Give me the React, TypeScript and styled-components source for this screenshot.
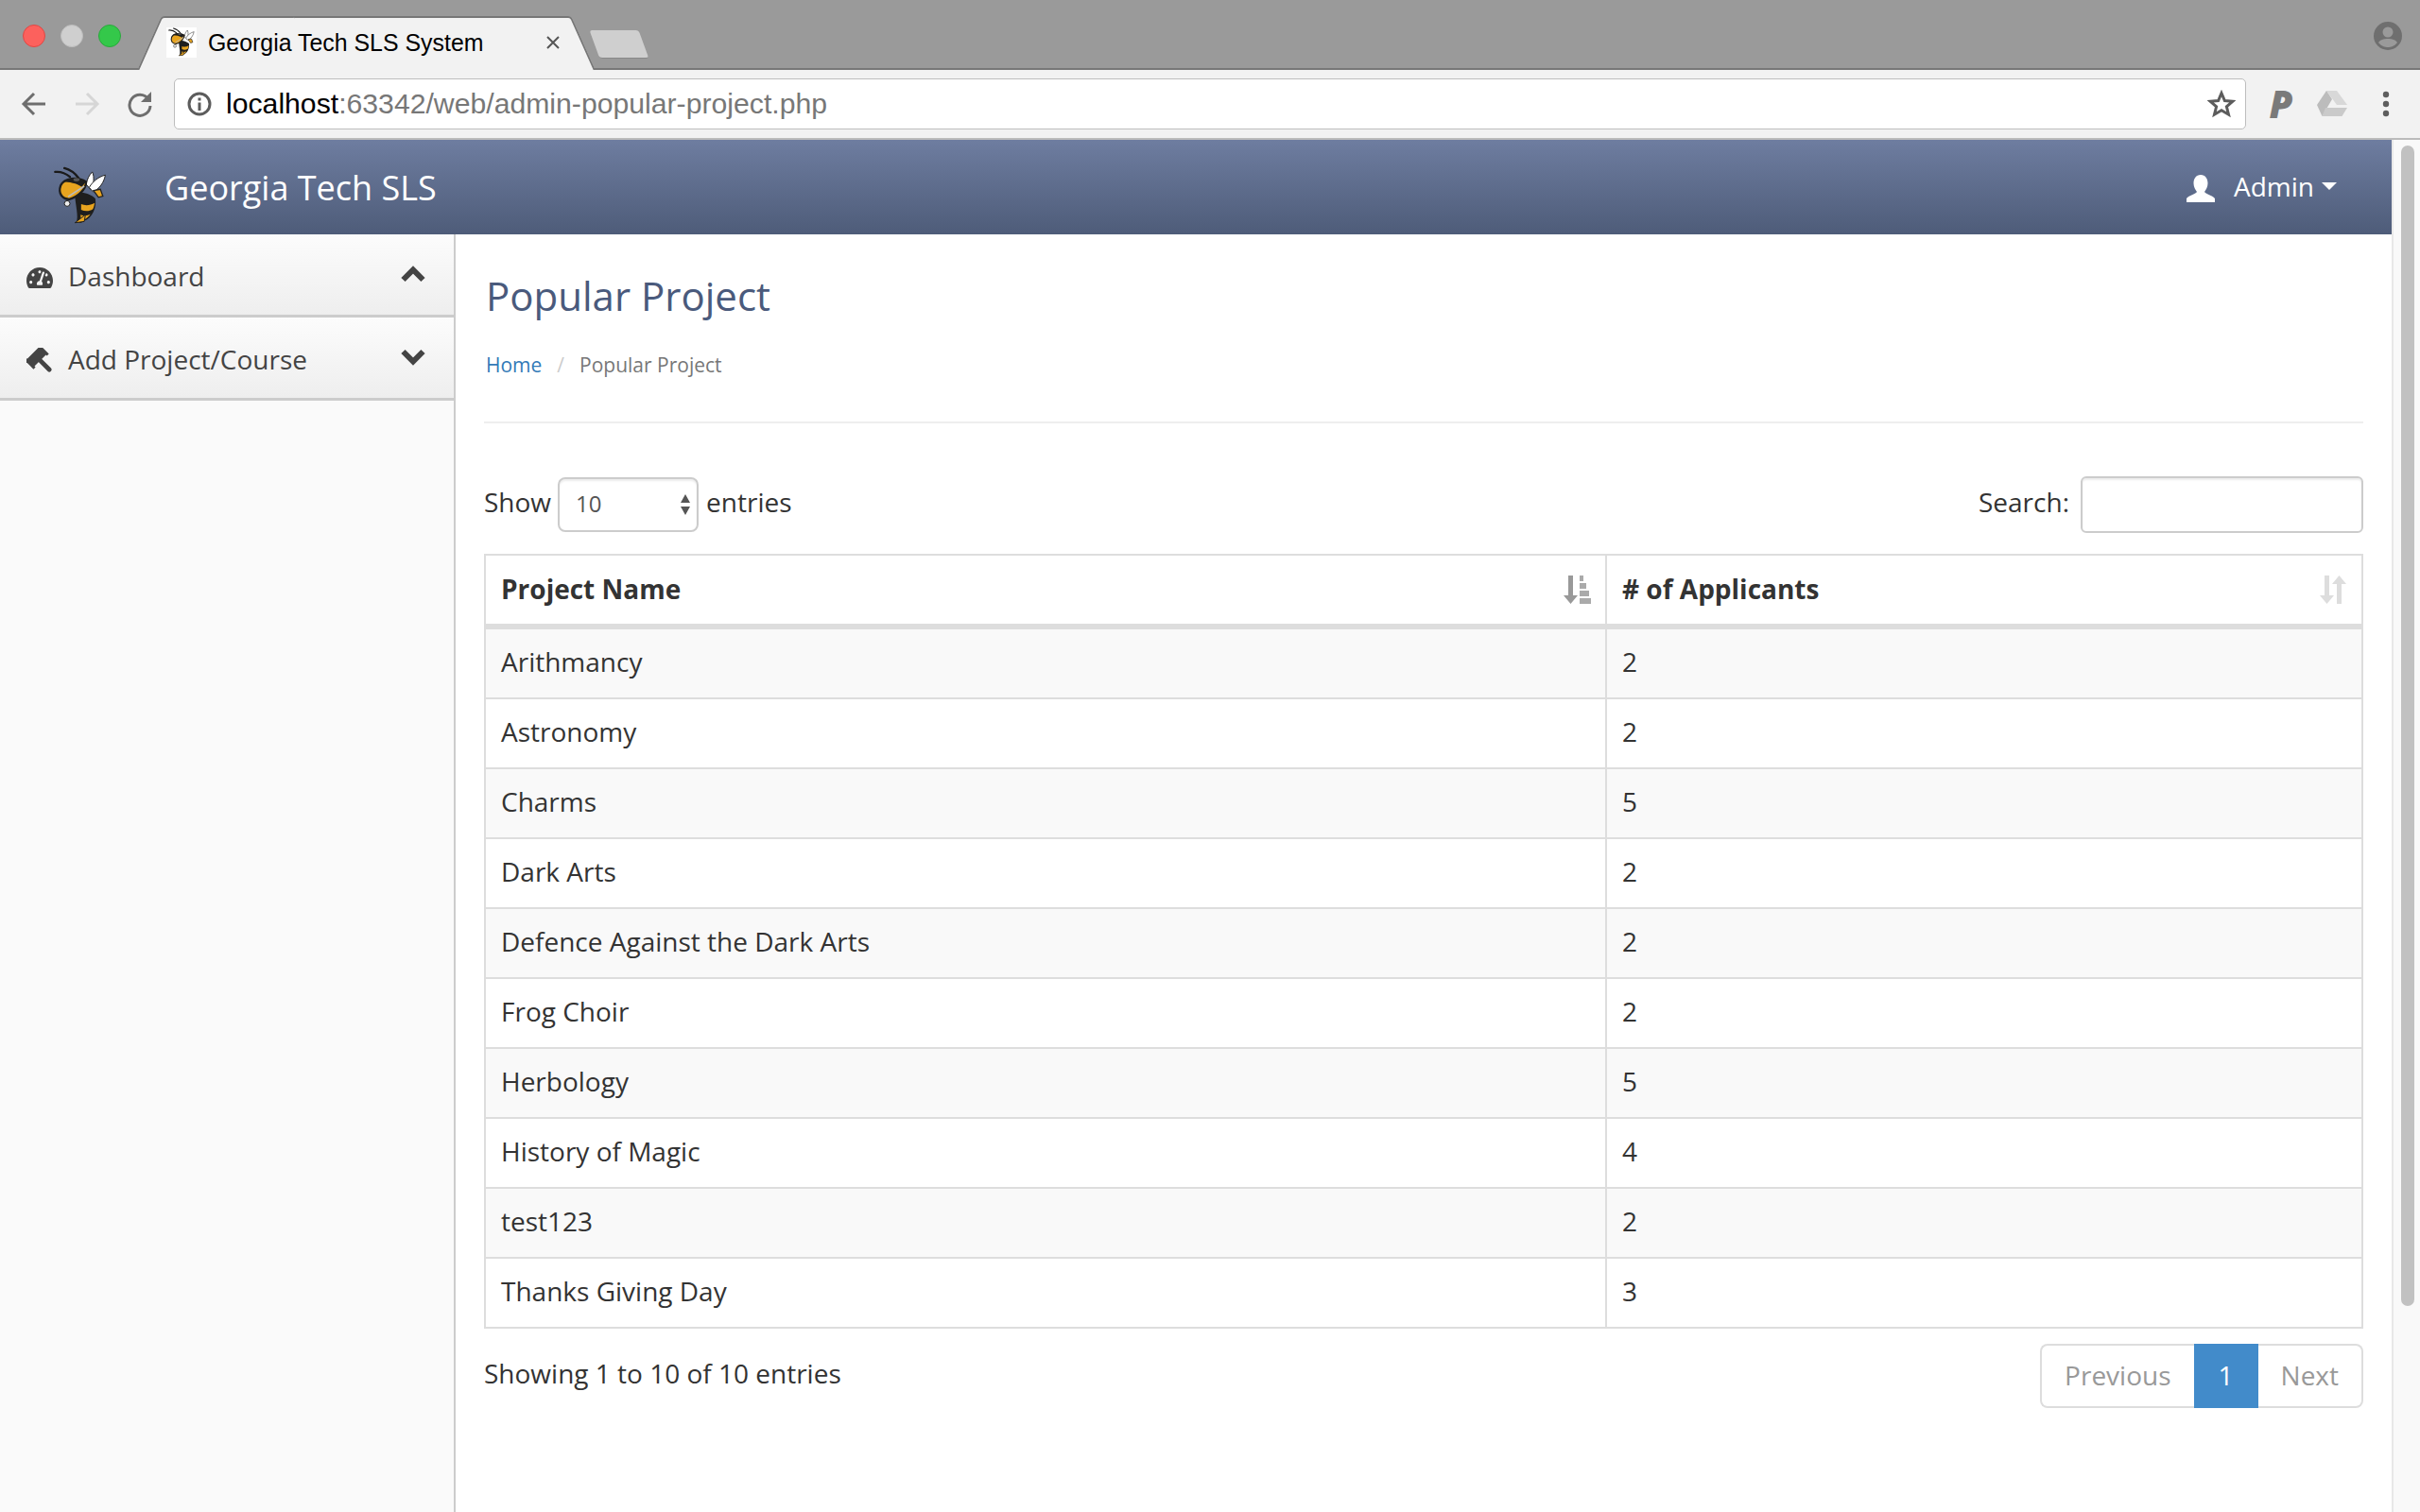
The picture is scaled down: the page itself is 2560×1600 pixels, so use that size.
import React from "react";
import styled, { createGlobalStyle } from "styled-components";
import { FaTachometerAlt } from "react-icons/fa";

const rows: [string, number][] = [
  ["Arithmancy", 2],
  ["Astronomy", 2],
  ["Charms", 5],
  ["Dark Arts", 2],
  ["Defence Against the Dark Arts", 2],
  ["Frog Choir", 2],
  ["Herbology", 5],
  ["History of Magic", 4],
  ["test123", 2],
  ["Thanks Giving Day", 3],
];

const GlobalStyle = createGlobalStyle`
  html, body {
    margin: 0;
    height: 100%;
    overflow: hidden;
    background: #fff;
  }
  * {
    box-sizing: border-box;
  }
`;

const Shell = styled.div`
  width: 2560px;
  height: 1600px;
  display: flex;
  flex-direction: column;
  font-family: "Open Sans", "Liberation Sans", sans-serif;
  font-size: 28px;
  line-height: 40px;
  color: #333;
`;

/* browser chrome */
const TabStrip = styled.div`
  height: 74px;
  flex: none;
  display: flex;
  align-items: flex-end;
  background: #9a9a9a;
  border-bottom: 2px solid #777;
  padding-left: 24px;
`;

const Lights = styled.div`
  display: flex;
  gap: 16px;
  align-self: flex-start;
  margin-top: 26px;
`;

const Light = styled.span<{ $color: string; $edge: string }>`
  width: 24px;
  height: 24px;
  border-radius: 50%;
  background: ${(p) => p.$color};
  border: 1px solid ${(p) => p.$edge};
`;

const Tab = styled.div`
  position: relative;
  width: 487px;
  height: 57px;
  margin-left: 16px;
  margin-bottom: -2px;
  display: flex;
  align-items: center;
  padding: 0 0 2px 32px;
  font-family: "Liberation Sans", sans-serif;
  font-size: 24.9px;
  color: #000;
  z-index: 1;
  &::before,
  &::after {
    content: "";
    position: absolute;
    top: 0;
    bottom: 0;
    width: 60%;
    background: #f2f2f2;
    border-top: 2px solid #777;
    z-index: -1;
  }
  &::before {
    left: 14px;
    border-left: 2px solid #777;
    border-radius: 4px 0 0 0;
    transform: skewX(-24deg);
  }
  &::after {
    right: 14px;
    border-right: 2px solid #777;
    border-radius: 0 4px 0 0;
    transform: skewX(24deg);
  }
`;

const Favicon = styled.span`
  width: 32px;
  height: 32px;
  flex: none;
  background: #fff;
  display: flex;
  margin-right: 12px;
`;

const TabTitle = styled.span`
  flex: 1;
  white-space: nowrap;
`;

const TabClose = styled.svg`
  width: 14px;
  height: 14px;
  margin-right: 39px;
  flex: none;
`;

const NewTab = styled.div`
  width: 52px;
  height: 30px;
  margin: 0 0 10px -2px;
  background: #cfcfcf;
  border-radius: 3px;
  border-bottom: 1px solid #888;
  transform: skewX(20deg);
`;

const Avatar = styled.svg`
  width: 30px;
  height: 30px;
  margin-left: auto;
  margin-right: 19px;
  align-self: flex-start;
  margin-top: 23px;
`;

const Toolbar = styled.div`
  height: 74px;
  flex: none;
  display: flex;
  align-items: center;
  background: #f2f2f2;
  border-bottom: 2px solid #bbb;
  padding: 0 0 0 22px;
`;

const NavIcon = styled.svg`
  width: 28px;
  height: 28px;
  flex: none;
  margin-right: 28px;
`;

const Omnibox = styled.div`
  width: 2192px;
  height: 54px;
  margin-left: -6px;
  display: flex;
  align-items: center;
  padding: 0 10px 0 13px;
  background: #fff;
  border: 1px solid #bdbdbd;
  border-radius: 5px;
  font-family: "Liberation Sans", sans-serif;
  font-size: 30.2px;
  color: #777;
`;

const Host = styled.span`
  color: #000;
`;

const UrlIcon = styled.svg`
  width: 26px;
  height: 26px;
  flex: none;
  margin-right: 15px;
`;

const Star = styled.svg`
  width: 30px;
  height: 30px;
  margin-left: auto;
`;

const ExtensionP = styled.span`
  width: 56px;
  margin-left: 9px;
  text-align: center;
  font-family: "Open Sans", sans-serif;
  font-weight: 800;
  font-style: italic;
  font-size: 40px;
  color: #7a7a7a;
`;

const DriveIcon = styled.svg`
  width: 32px;
  height: 28px;
  margin-left: 10px;
`;

const MenuIcon = styled.svg`
  width: 8px;
  height: 28px;
  margin-left: 37px;
`;

/* page */
const Viewport = styled.div`
  flex: 1;
  min-height: 0;
  display: flex;
`;

const Page = styled.div`
  flex: 1;
  min-width: 0;
  display: flex;
  flex-direction: column;
`;

const Scrollbar = styled.div`
  width: 30px;
  flex: none;
  padding: 6px 6px 0 8px;
  background: #f9f9f9;
  border-left: 2px solid #e8e8e8;
`;

const Thumb = styled.div`
  height: 1228px;
  border-radius: 8px;
  background: #c1c1c1;
`;

const Header = styled.header`
  height: 100px;
  flex: none;
  display: flex;
  align-items: center;
  padding: 0 58px 0 56px;
  background: linear-gradient(#6e7da0, #4e5c79);
  color: #fff;
`;

const BrandLogo = styled.span`
  width: 60px;
  height: 64px;
  display: flex;
  margin: 20px 59px 0 -1px;
`;

const Brand = styled.span`
  font-size: 36px;
  margin-top: 2px;
`;

const UserMenu = styled.div`
  margin-left: auto;
  display: flex;
  align-items: center;
  margin-top: -2px;
`;

const UserIcon = styled.svg`
  width: 30px;
  height: 29px;
  margin: 4px 20px 0 0;
`;

const Caret = styled.span`
  margin-left: 8px;
  border-top: 8px solid #fff;
  border-left: 8px solid transparent;
  border-right: 8px solid transparent;
`;

const Body = styled.div`
  flex: 1;
  min-height: 0;
  display: flex;
`;

const Sidebar = styled.nav`
  width: 482px;
  flex: none;
  background: #fafafa;
  border-right: 2px solid #ccc;
`;

const SideItem = styled.div`
  height: 88px;
  display: flex;
  align-items: center;
  padding: 2px 30px 0 28px;
  background: linear-gradient(#fcfcfc, #eeeeee);
  border-bottom: 3px solid #ccc;
  color: #444;
`;

const SideIconSlot = styled.span`
  width: 44px;
  height: 28px;
  flex: none;
  display: flex;
  align-items: center;
  margin-top: 4px;
  font-size: 28px;
  color: #444;
`;

const Chevron = styled.svg`
  width: 26px;
  height: 18px;
  margin-left: auto;
  margin-top: -4px;
`;

const Main = styled.main`
  flex: 1;
  min-width: 0;
  padding: 0 30px;
`;

const Title = styled.h1`
  margin: 37px 0 0 2px;
  font-size: 42px;
  line-height: 56px;
  font-weight: 400;
  color: #4a5a7c;
`;

const Crumbs = styled.div`
  margin: 29px 0 0 2px;
  display: flex;
  font-size: 21px;
  line-height: 32px;
  color: #777;
`;

const CrumbLink = styled.a`
  color: #337ab7;
`;

const CrumbSep = styled.span`
  margin: 0 16px;
  color: #ccc;
`;

const Rule = styled.hr`
  margin: 44px 0 0;
  border: 0;
  border-top: 2px solid #eee;
`;

const Controls = styled.div`
  margin-top: 56px;
  height: 60px;
  display: flex;
  align-items: center;
  justify-content: space-between;
`;

const ControlGroup = styled.label`
  display: flex;
  align-items: center;
`;

const ControlText = styled.span`
  margin-bottom: 6px;
`;

const SelectWrap = styled.span`
  position: relative;
  display: flex;
  margin: 0 8px 0 7px;
`;

const LengthSelect = styled.select`
  appearance: none;
  width: 149px;
  height: 58px;
  padding: 0 0 3px 17px;
  background: #fff;
  border: 2px solid #ccc;
  border-radius: 8px;
  box-shadow: inset 0 2px 2px rgba(0, 0, 0, 0.075);
  font-family: "Open Sans", sans-serif;
  font-size: 24px;
  color: #555;
`;

const SelectArrows = styled.svg`
  position: absolute;
  top: 18px;
  right: 8px;
  width: 12px;
  height: 22px;
  pointer-events: none;
`;

const SearchInput = styled.input`
  width: 299px;
  height: 60px;
  margin-left: 12px;
  background: #fff;
  border: 2px solid #ccc;
  border-radius: 6px;
  box-shadow: inset 0 2px 2px rgba(0, 0, 0, 0.075);
`;

const Table = styled.table`
  width: 100%;
  margin-top: 22px;
  table-layout: fixed;
  border-collapse: separate;
  border-spacing: 0;
  border-top: 2px solid #ddd;
  border-left: 2px solid #ddd;
`;

const HeadCell = styled.th`
  position: relative;
  padding: 15px 16px 17px;
  text-align: left;
  font-weight: 700;
  border-right: 2px solid #ddd;
  border-bottom: 6px solid #ddd;
`;

const Cell = styled.td`
  padding: 14px 16px 18px;
  border-right: 2px solid #ddd;
  border-bottom: 2px solid #ddd;
`;

const Row = styled.tr<{ $striped: boolean }>`
  background: ${(p) => (p.$striped ? "#f9f9f9" : "#fff")};
`;

const SortIcon = styled.svg`
  position: absolute;
  top: 21px;
  right: 15px;
  width: 30px;
  height: 30px;
`;

const Footer = styled.div`
  margin-top: 16px;
  display: flex;
  justify-content: space-between;
  align-items: flex-start;
`;

const Info = styled.div`
  margin-top: 11px;
`;

const Pager = styled.div`
  display: flex;
  height: 68px;
`;

const PageButton = styled.span<{ $active?: boolean; $side?: "left" | "right" }>`
  padding: 0 ${(p) => (p.$active ? "26px" : "24px")} 2px;
  display: flex;
  align-items: center;
  background: ${(p) => (p.$active ? "#428bca" : "#fff")};
  color: ${(p) => (p.$active ? "#fff" : "#999")};
  border: ${(p) => (p.$active ? "0" : "2px solid #ddd")};
  border-left: ${(p) => (p.$side === "right" ? "0" : undefined)};
  border-right: ${(p) => (p.$side === "left" ? "0" : undefined)};
  border-radius: ${(p) =>
    p.$side === "left" ? "8px 0 0 8px" : p.$side === "right" ? "0 8px 8px 0" : "0"};
`;

const Bee: React.FC = () => (
  <svg viewBox="80 50 175 195" width="100%" height="100%">
    <path d="M86 68C105 66 120 72 134 84M116 56C132 60 150 72 162 88" fill="none" stroke="#1a1a1a" strokeWidth="7" strokeLinecap="round" />
    <path d="M186 108C190 90 196 78 206 68C214 84 210 112 202 126Z" fill="#fff" stroke="#222" strokeWidth="3" />
    <path d="M196 118C208 98 226 84 248 78C244 102 228 124 208 132Z" fill="#fff" stroke="#222" strokeWidth="3" />
    <path d="M150 140C164 128 200 138 216 154C220 184 206 216 180 226L170 232L154 232C164 214 150 170 150 140Z" fill="#1e1e1e" />
    <path d="M170 172C184 178 200 176 214 168C212 176 211 182 208 188C196 196 182 196 170 190Z" fill="#e8a41f" />
    <path d="M168 206C178 210 190 210 200 204C194 214 184 222 170 226Z" fill="#e8a41f" />
    <path d="M104 112C116 88 158 82 186 100C186 124 160 148 132 156C112 156 94 140 104 112Z" fill="#e8a41f" stroke="#1e1e1e" strokeWidth="7" />
    <path d="M112 100C130 84 166 84 186 100L172 116C156 104 130 100 112 100Z" fill="#1e1e1e" />
    <ellipse cx="155" cy="93" rx="10" ry="6" fill="#555" />
    <path d="M128 148L180 114" stroke="#bbb" strokeWidth="5" />
    <circle cx="125" cy="170" r="9" fill="#eee" stroke="#222" strokeWidth="3" />
    <path d="M210 128L232 124L240 146L226 150Z" fill="#e8a41f" stroke="#222" strokeWidth="4" />
    <path d="M150 232L184 206L180 228Z" fill="#e8a41f" stroke="#1e1e1e" strokeWidth="3" />
  </svg>
);

const GavelIcon: React.FC = () => (
  <svg viewBox="0 0 28 28" width="28" height="28" fill="#444">
    <g transform="rotate(45 11 10)">
      <rect x="5" y="0" width="11" height="20" />
      <rect x="3.5" y="-1.5" width="14" height="3" />
      <rect x="3.5" y="18.5" width="14" height="3" />
      <rect x="14" y="7.6" width="18" height="4.8" rx="2.2" />
    </g>
  </svg>
);

const App: React.FC = () => {
  return (
    <Shell>
      <GlobalStyle />
      <TabStrip>
        <Lights>
          <Light $color="#fc615d" $edge="#df4744" />
          <Light $color="#cfcfcf" $edge="#bdbdbd" />
          <Light $color="#34c84a" $edge="#2aa83c" />
        </Lights>
        <Tab>
          <Favicon>
            <Bee />
          </Favicon>
          <TabTitle>Georgia Tech SLS System</TabTitle>
          <TabClose viewBox="0 0 14 14">
            <path d="M1 1L13 13M13 1L1 13" stroke="#555" strokeWidth="2" />
          </TabClose>
        </Tab>
        <NewTab />
        <Avatar viewBox="0 0 30 30">
          <circle cx="15" cy="15" r="15" fill="#6f6f6f" />
          <circle cx="15" cy="11" r="5.5" fill="#9a9a9a" />
          <path d="M5 22C8 16.5 22 16.5 25 22C22 26 18 27 15 27C12 27 8 26 5 22Z" fill="#9a9a9a" />
        </Avatar>
      </TabStrip>
      <Toolbar>
        <NavIcon viewBox="0 0 28 28">
          <path d="M26 14H4M14 3L3 14L14 25" fill="none" stroke="#6e6e6e" strokeWidth="3" />
        </NavIcon>
        <NavIcon viewBox="0 0 28 28">
          <path d="M2 14H24M14 3L25 14L14 25" fill="none" stroke="#d6d6d6" strokeWidth="3" />
        </NavIcon>
        <NavIcon viewBox="0 0 28 28">
          <path d="M23 9A11 11 0 1 0 25 16" fill="none" stroke="#6e6e6e" strokeWidth="3" />
          <path d="M26 1V12H15Z" fill="#6e6e6e" />
        </NavIcon>
        <Omnibox>
          <UrlIcon viewBox="0 0 26 26">
            <circle cx="13" cy="13" r="11" fill="none" stroke="#5c5c5c" strokeWidth="3" />
            <path d="M11.5 11.5H14.5V20H11.5ZM11.5 6.5H14.5V9.5H11.5Z" fill="#5c5c5c" />
          </UrlIcon>
          <Host>localhost</Host>:63342/web/admin-popular-project.php
          <Star viewBox="0 0 30 30">
            <path d="M15 3.5L18.4 11.5L27 12.2L20.4 17.8L22.5 26.2L15 21.7L7.5 26.2L9.6 17.8L3 12.2L11.6 11.5Z" fill="none" stroke="#5c5c5c" strokeWidth="3" />
          </Star>
        </Omnibox>
        <ExtensionP>P</ExtensionP>
        <DriveIcon viewBox="0 0 32 28">
          <path d="M10 0H21L32 15H21Z" fill="#d8d8d8" />
          <path d="M10 0L0 15L5.5 27L16 9Z" fill="#bcbcbc" />
          <path d="M9 18H32L26.5 27H5.5Z" fill="#cacaca" />
        </DriveIcon>
        <MenuIcon viewBox="0 0 8 28">
          <circle cx="4" cy="4" r="3.2" fill="#5e5e5e" />
          <circle cx="4" cy="14" r="3.2" fill="#5e5e5e" />
          <circle cx="4" cy="24" r="3.2" fill="#5e5e5e" />
        </MenuIcon>
      </Toolbar>
      <Viewport>
        <Page>
          <Header>
            <BrandLogo>
              <Bee />
            </BrandLogo>
            <Brand>Georgia Tech SLS</Brand>
            <UserMenu>
              <UserIcon viewBox="0 0 30 29">
                <path d="M15 0C20 0 22.5 4 22.5 9C22.5 13 20.5 16 19 18C21 20.5 27 21.5 30 25V29H0V25C3 21.5 9 20.5 11 18C9.5 16 7.5 13 7.5 9C7.5 4 10 0 15 0Z" fill="#fff" />
              </UserIcon>
              Admin
              <Caret />
            </UserMenu>
          </Header>
          <Body>
            <Sidebar>
              <SideItem>
                <SideIconSlot>
                  <FaTachometerAlt />
                </SideIconSlot>
                Dashboard
                <Chevron viewBox="0 0 26 18">
                  <path d="M2.5 15L13 4.5L23.5 15" fill="none" stroke="#444" strokeWidth="6" />
                </Chevron>
              </SideItem>
              <SideItem>
                <SideIconSlot>
                  <GavelIcon />
                </SideIconSlot>
                Add Project/Course
                <Chevron viewBox="0 0 26 18">
                  <path d="M2.5 3L13 13.5L23.5 3" fill="none" stroke="#444" strokeWidth="6" />
                </Chevron>
              </SideItem>
            </Sidebar>
            <Main>
              <Title>Popular Project</Title>
              <Crumbs>
                <CrumbLink>Home</CrumbLink>
                <CrumbSep>/</CrumbSep>
                Popular Project
              </Crumbs>
              <Rule />
              <Controls>
                <ControlGroup>
                  <ControlText>Show</ControlText>
                  <SelectWrap>
                    <LengthSelect defaultValue="10">
                      <option>10</option>
                    </LengthSelect>
                    <SelectArrows viewBox="0 0 12 22">
                      <path d="M6 0L11 9H1ZM6 22L1 13H11Z" fill="#555" />
                    </SelectArrows>
                  </SelectWrap>
                  <ControlText>entries</ControlText>
                </ControlGroup>
                <ControlGroup>
                  <ControlText>Search:</ControlText>
                  <SearchInput />
                </ControlGroup>
              </Controls>
              <Table>
                <colgroup>
                  <col style={{ width: 1186 }} />
                  <col />
                </colgroup>
                <thead>
                  <tr>
                    <HeadCell>
                      Project Name
                      <SortIcon viewBox="0 0 30 30">
                        <path d="M6 0H11V21H16L8.5 30L1 21H6Z" fill="#999" />
                        <path d="M18 0H22V6H18ZM18 8H25V14H18ZM18 16H28V22H18ZM18 24H30V30H18Z" fill="#aaa" />
                      </SortIcon>
                    </HeadCell>
                    <HeadCell>
                      # of Applicants
                      <SortIcon viewBox="0 0 30 30">
                        <path d="M6 0H11V21H16L8.5 30L1 21H6Z" fill="#ddd" />
                        <path d="M19 30H24V9H29L21.5 0L14 9H19Z" fill="#ddd" />
                      </SortIcon>
                    </HeadCell>
                  </tr>
                </thead>
                <tbody>
                  {rows.map(([name, count], i) => (
                    <Row key={name} $striped={i % 2 === 0}>
                      <Cell>{name}</Cell>
                      <Cell>{count}</Cell>
                    </Row>
                  ))}
                </tbody>
              </Table>
              <Footer>
                <Info>Showing 1 to 10 of 10 entries</Info>
                <Pager>
                  <PageButton $side="left">Previous</PageButton>
                  <PageButton $active>1</PageButton>
                  <PageButton $side="right">Next</PageButton>
                </Pager>
              </Footer>
            </Main>
          </Body>
        </Page>
        <Scrollbar>
          <Thumb />
        </Scrollbar>
      </Viewport>
    </Shell>
  );
};

export default App;
